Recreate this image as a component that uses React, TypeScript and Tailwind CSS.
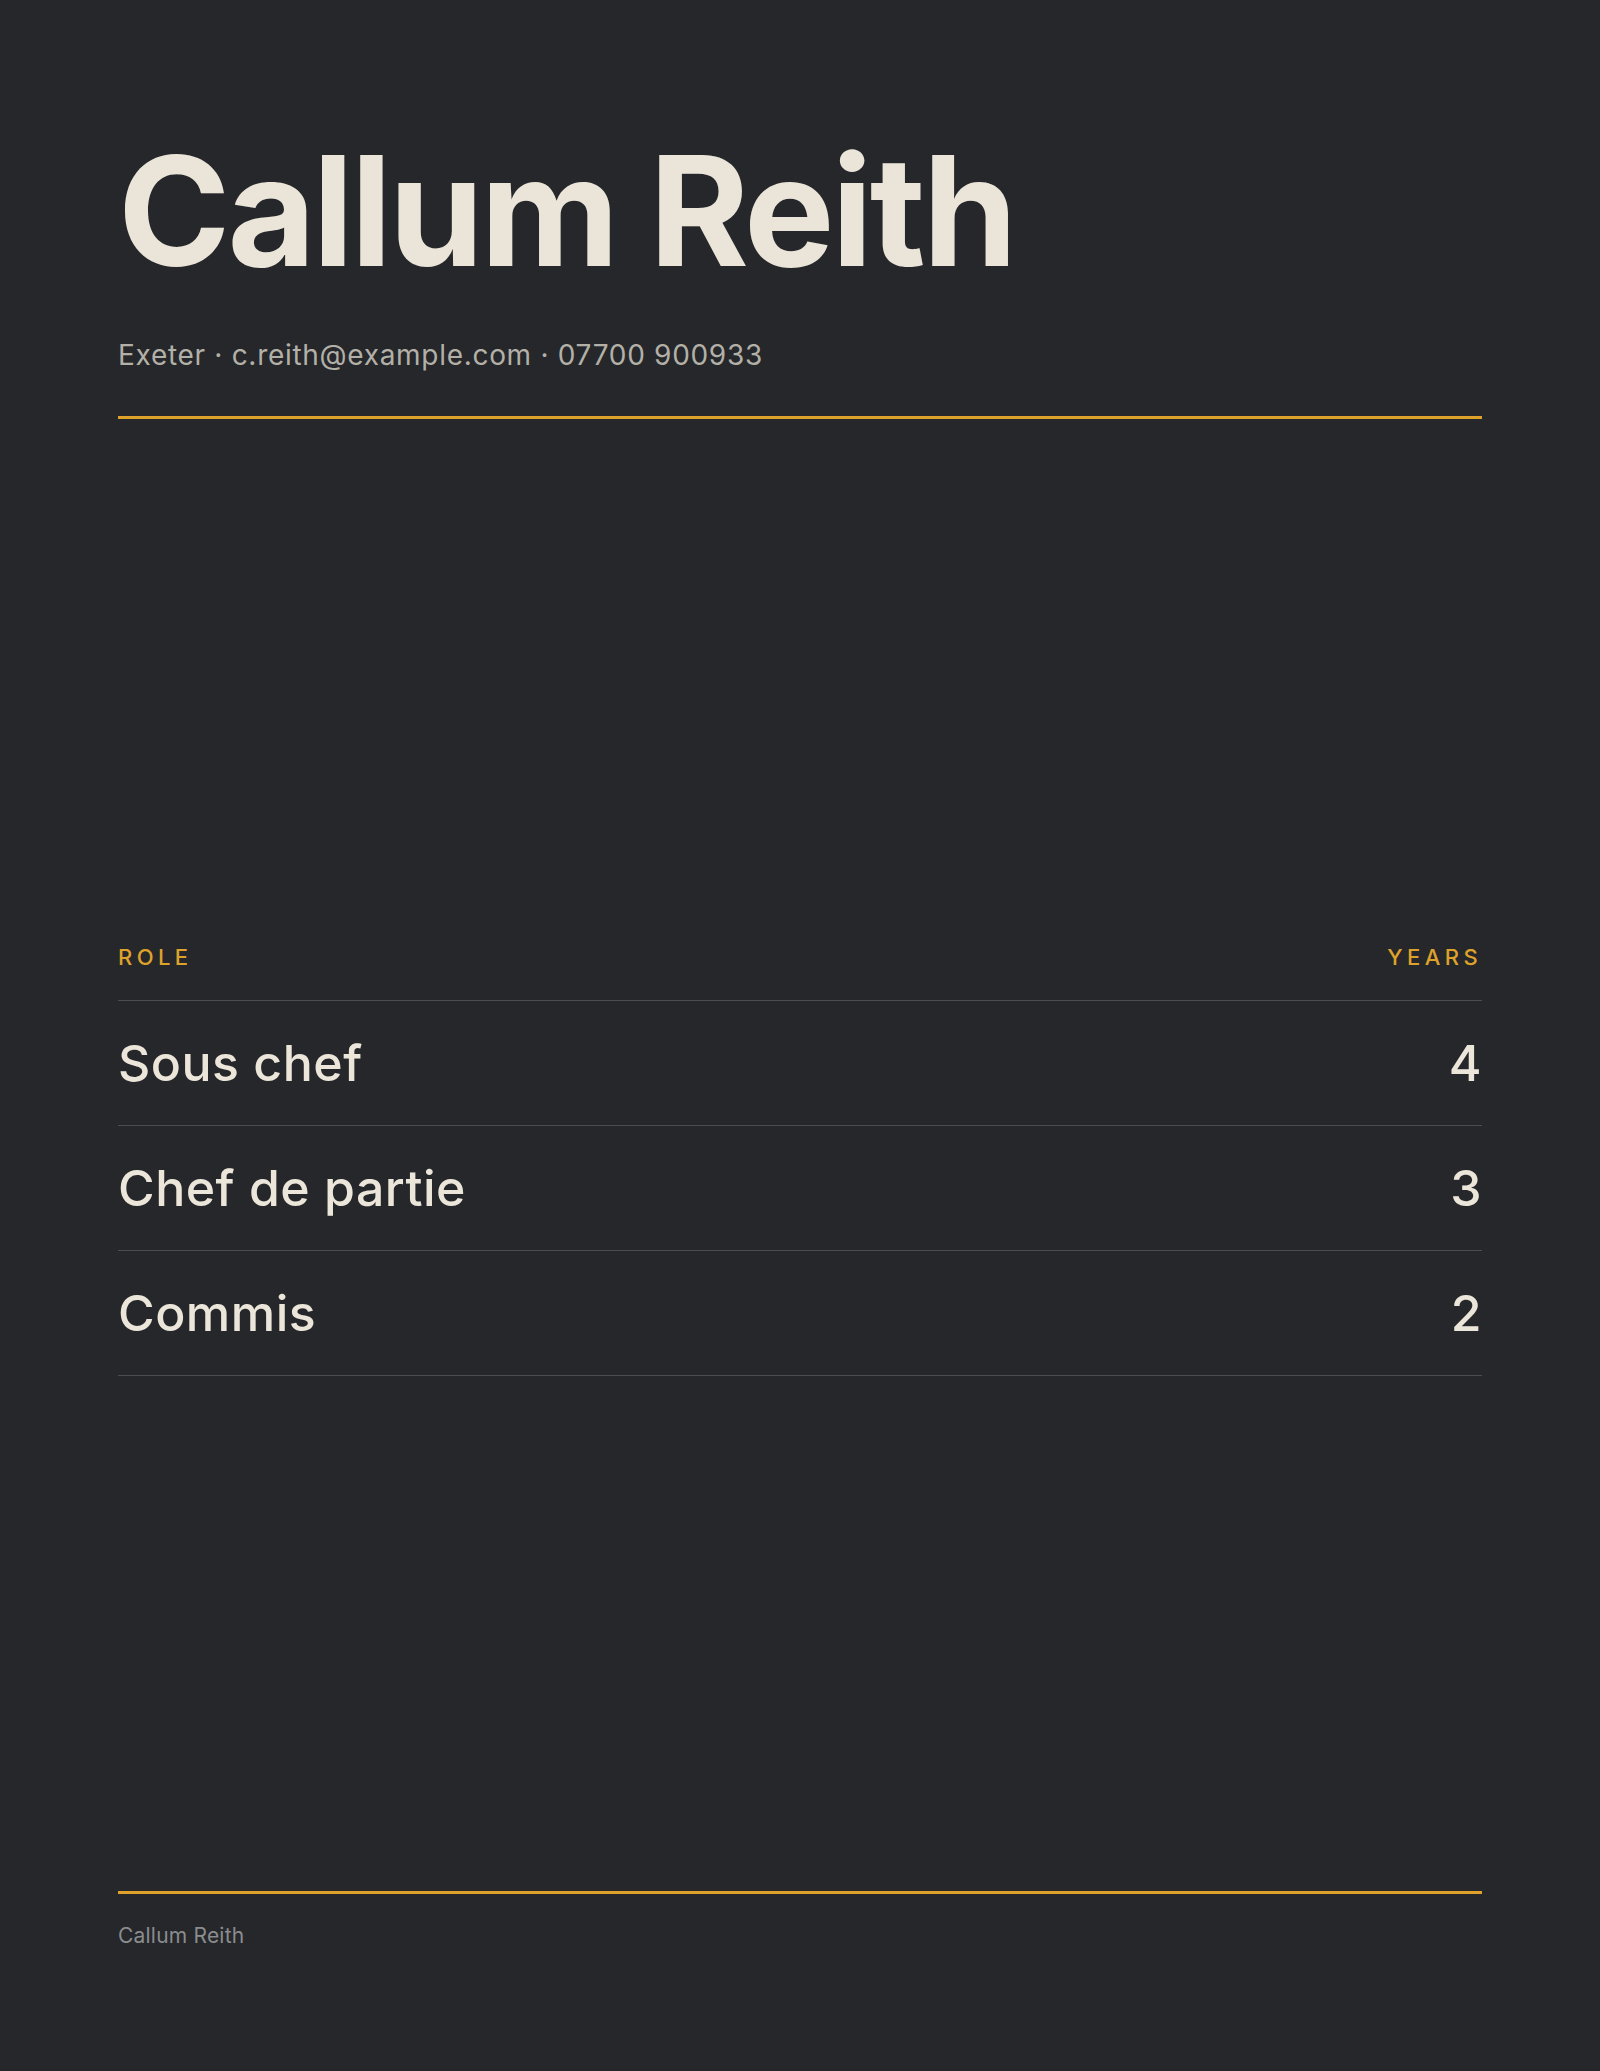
import React from 'react'

interface Role {
    title: string
    years: number
}

const roles: Role[] = [
    { title: 'Sous chef', years: 4 },
    { title: 'Chef de partie', years: 3 },
    { title: 'Commis', years: 2 },
]

export default function App() {
    return (
        <div
            className="min-h-[2071px] bg-[#25272b] px-[118px] flex flex-col"
            style={{ fontFamily: 'Inter, "Liberation Sans", sans-serif' }}
        >
            {/* header */}
            <header className="pt-[135px]">
                <h1 className="text-[152px] leading-none font-bold tracking-[-0.02em] text-[#ebe5d9]">
                    Callum Reith
                </h1>
                <p className="mt-[54px] text-[28px] leading-none tracking-[0.025em] text-[#b3b0a7]">
                    Exeter · c.reith@example.com · 07700 900933
                </p>
                <div className="mt-[47px] h-[3px] bg-[#dea22b]" />
            </header>

            {/* roles table */}
            <section className="mt-[527px]">
                <div className="flex justify-between pb-[32px] border-b border-[#4b4d52] text-[22px] leading-none font-medium tracking-[0.2em] text-[#dea22b]">
                    <span>ROLE</span>
                    <span>YEARS</span>
                </div>
                {roles.map((role) => (
                    <div
                        key={role.title}
                        className="flex items-center justify-between h-[125px] border-b border-[#4b4d52] text-[50px] leading-none font-medium tracking-[0.01em] text-[#ece6da]"
                    >
                        <span>{role.title}</span>
                        <span>{role.years}</span>
                    </div>
                ))}
            </section>

            {/* footer */}
            <footer className="mt-auto pb-[125px]">
                <div className="h-[3px] bg-[#dea22b]" />
                <p className="mt-[31px] text-[21px] leading-none tracking-[0.01em] text-[#8b8c8e]">Callum Reith</p>
            </footer>
        </div>
    )
}
